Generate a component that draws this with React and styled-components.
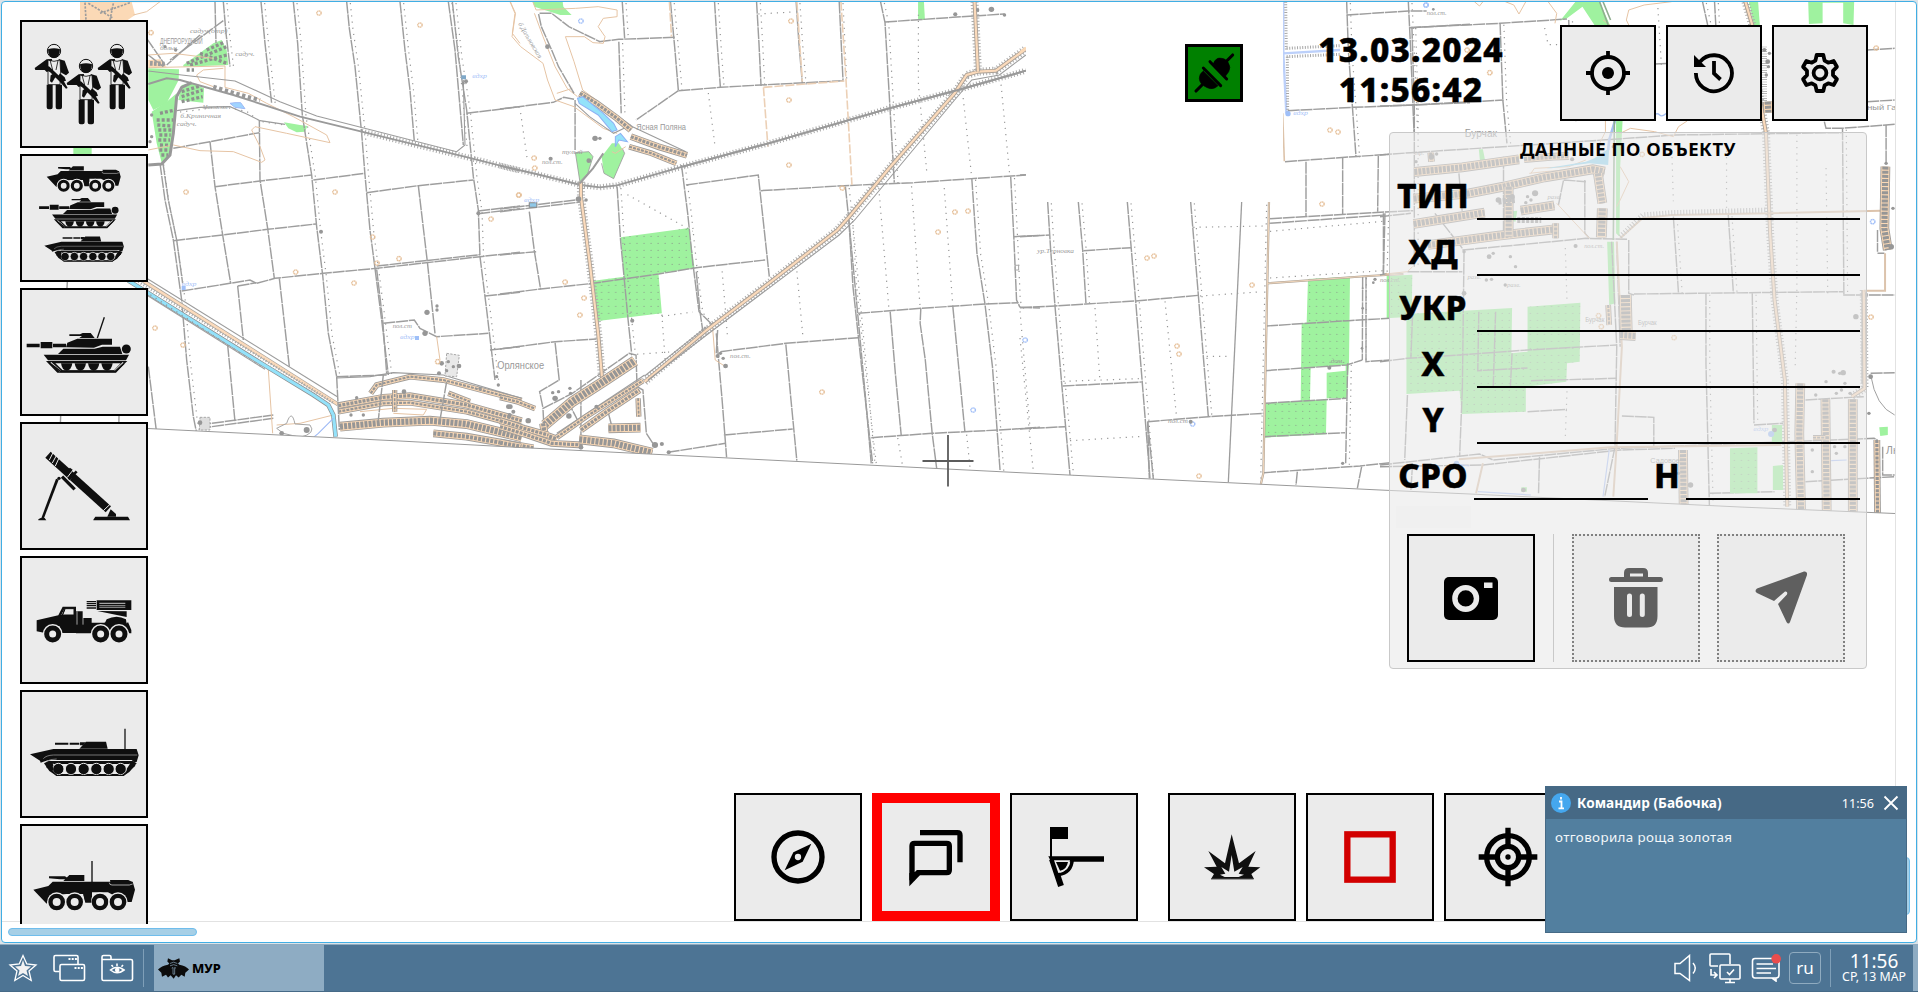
import React from "react";
import styled, { createGlobalStyle } from "styled-components";

const ink = "#0f0f0f";
const paper = "#ebebeb";
const uiFont = '"Noto Sans", "Open Sans", "Liberation Sans", sans-serif';

const GlobalStyle = createGlobalStyle`
  html, body { margin: 0; padding: 0; background: #dcdcdc; overflow: hidden; }
  * { box-sizing: border-box; }
`;

const Desktop = styled.div`
  width: 1918px;
  height: 992px;
  display: flex;
  flex-direction: column;
  position: relative;
  overflow: hidden;
  font-family: ${uiFont};
  background: #dce3e8;
`;

const AppWindow = styled.section`
  position: relative;
  flex: none;
  height: 942px;
  margin: 1px 1px 1px;
  border: 1px solid #41aee4;
  border-radius: 4px;
  background: #fff;
  overflow: hidden;
`;

const MapSvg = styled.svg`
  position: absolute;
  inset: 0;
  width: 1914px;
  height: 940px;
  font-family: "Liberation Sans", sans-serif;
`;

const Overlay = styled.div`
  position: absolute;
  inset: 0;
  padding: 18px 48px 18px 18px;
  display: flex;
`;

const Palette = styled.nav`
  display: flex;
  flex-direction: column;
  gap: 6px;
  width: 128px;
  height: 904px;
  overflow: hidden;
`;

const Stage = styled.div`
  flex: 1;
  display: flex;
  flex-direction: column;
  padding-top: 5px;
`;

const borders = {
  plain: "2px solid #000",
  active: "10px solid #f00",
  disabled: "2px dotted #808080",
};

const Key = styled.button`
  flex: none;
  width: ${(p) => p.$size || 128}px;
  height: ${(p) => p.$size || 128}px;
  padding: 0;
  display: flex;
  align-items: center;
  justify-content: center;
  overflow: hidden;
  background: ${paper};
  border: ${(p) => borders[p.$kind || "plain"]};
  svg { display: block; flex: none; }
`;

const TopRow = styled.div`
  display: flex;
  justify-content: flex-end;
  align-items: center;
  height: 96px;
`;

const LinkState = styled.div`
  width: 58px;
  height: 58px;
  border: 3px solid #000;
  background: #008000;
  display: flex;
`;

const Clock = styled.div`
  width: 216px;
  margin: 0 41px 9px 60px;
  text-align: center;
  font-size: 33.5px;
  font-weight: 800;
  line-height: 40px;
  letter-spacing: 1.15px;
  -webkit-text-stroke: 0.5px #000;
  color: #000;
  white-space: nowrap;
`;

const TopKeys = styled.div`
  display: flex;
  gap: 10px;
`;

const Panel = styled.section`
  align-self: flex-end;
  margin: 11px 1px 0 0;
  width: 478px;
  height: 537px;
  border: 1px solid #c9c9c9;
  border-radius: 4px;
  background: rgba(233, 233, 233, 0.57);
  padding: 3px 6px 0 6px;
  display: flex;
  flex-direction: column;
`;

const PanelTitle = styled.h2`
  margin: 0;
  height: 28px;
  line-height: 26px;
  text-align: center;
  font-size: 18.5px;
  font-weight: 700;
  letter-spacing: 0.52px;
  color: #000;
`;

const Field = styled.div`
  display: flex;
  height: 56px;
  align-items: flex-end;
`;

const FieldLabel = styled.label`
  width: ${(p) => p.$w || 74}px;
  text-align: center;
  font-size: 33.5px;
  font-weight: 800;
  line-height: 46px;
  height: 56px;
  color: #000;
  padding-top: 8px;
  letter-spacing: 0.2px;
  -webkit-text-stroke: 0.4px #000;
`;

const FieldLine = styled.div`
  flex: 1;
  height: 2px;
  background: #000;
  margin-left: ${(p) => p.$gap ?? 7}px;
`;

const StatusChip = styled.div`
  width: 75px;
  height: 22px;
  margin-top: 6px;
  background: #f0f0f0;
`;

const Actions = styled.div`
  display: flex;
  margin: 6px 0 0 11px;
`;

const Divider = styled.div`
  width: 1px;
  height: 128px;
  margin: 0 18px;
  background: #c9c9c9;
`;

const SendSlot = styled.div`
  margin-left: 17px;
`;

const Toolbar = styled.div`
  display: flex;
  gap: 10px;
  margin: 124px 0 0 586px;
`;

const ToolGap = styled.div`
  width: 10px;
`;

const HScroll = styled.div`
  position: absolute;
  left: 6px;
  top: 926px;
  width: 189px;
  height: 8px;
  border-radius: 4px;
  background: #a6cfe6;
  border: 1px solid #6fbdec;
`;

const VScroll = styled.div`
  position: absolute;
  left: 1900px;
  top: 855px;
  width: 8px;
  height: 58px;
  border-radius: 4px;
  background: #a6cfe6;
  border: 1px solid #6fbdec;
`;

const Toast = styled.aside`
  position: absolute;
  left: 1545px;
  top: 786px;
  width: 362px;
  height: 147px;
  background: #527f9f;
  border: 1px solid #466a86;
  color: #fff;
`;

const ToastHead = styled.header`
  height: 32px;
  display: flex;
  align-items: center;
  padding: 0 7px 0 5px;
  background: #466985;
`;

const ToastSender = styled.strong`
  flex: 1;
  margin-left: 6px;
  font-size: 13.6px;
  font-weight: 700;
  line-height: 34px;
  letter-spacing: 0.05px;
`;

const ToastTime = styled.span`
  font-size: 12.6px;
  margin-right: 9px;
`;

const ToastBody = styled.p`
  margin: 0;
  padding: 8px 9px;
  font-size: 13.4px;
  line-height: 20px;
  letter-spacing: 0.36px;
  color: #f3f7fa;
`;

const Taskbar = styled.footer`
  height: 48px;
  display: flex;
  align-items: center;
  background: #4d7494;
  border-top: 1px solid #8fabc0;
  border-bottom: 1px solid #466a87;
  color: #fff;
`;

const Launchers = styled.div`
  display: flex;
  align-items: center;
  gap: 14px;
  padding-left: 8px;
  width: 143px;
  height: 46px;
`;

const BarRule = styled.div`
  width: 1px;
  height: 38px;
  background: #7f9fb8;
  margin-right: ${(p) => p.$after}px;
`;

const Task = styled.div`
  width: 170px;
  height: 46px;
  display: flex;
  align-items: center;
  padding-left: 4px;
  gap: 3px;
  background: #8eacc3;
  color: #000;
  font-size: 12.8px;
  font-weight: 800;
`;

const Tray = styled.div`
  margin-left: auto;
  display: flex;
  align-items: center;
  height: 46px;
`;

const TrayIcons = styled.div`
  display: flex;
  align-items: center;
  gap: 9px;
`;

const LayoutBadge = styled.div`
  width: 32px;
  height: 32px;
  margin: 0 9px 0 8px;
  border: 1px solid #8fabc0;
  border-radius: 4px;
  font-size: 17px;
  line-height: 29px;
  text-align: center;
`;

const TrayClock = styled.div`
  width: 74px;
  margin-right: 2px;
  text-align: center;
  white-space: nowrap;
`;

const TrayTime = styled.div`
  font-size: 19px;
  line-height: 17px;
`;

const TrayDate = styled.div`
  font-size: 12.3px;
  line-height: 14px;
`;

const BarEdge = styled.div`
  width: 5px;
  height: 46px;
  background: #8eacc3;
`;

/* ---------- map ---------- */

const nss = { vectorEffect: "non-scaling-stroke", fill: "none" };
const each = (list, fn) => list.map((d, i) => React.cloneElement(fn(d), { key: i }));
const pts = (s) => "M" + s;

const Road = ({ d }) => <path d={pts(d)} {...nss} stroke="#9e9e9e" strokeWidth="1.45" strokeDasharray="12 0.8" />;
const Dots = ({ d, dx = 14 }) => (
  <path d={pts(d)} {...nss} stroke="#969696" strokeWidth="1.2" strokeDasharray="1.2 5" transform={`translate(${dx} 4)`} />
);
const RoadDots = ({ d }) => (
  <g>
    <Road d={d} />
    <Dots d={d} dx={11} />
  </g>
);
const Thin = ({ d, c = "#9c9c9c", w = 1.1 }) => <path d={pts(d)} {...nss} stroke={c} strokeWidth={w} />;
const Contour = ({ d }) => <path d={pts(d)} {...nss} stroke="#e6c4a4" strokeWidth="1" strokeLinejoin="round" />;
const Rail = ({ d, ticks }) => (
  <g>
    {ticks && <path d={pts(d)} {...nss} stroke="#a8a8a8" strokeWidth="6" strokeDasharray="1 2.2" />}
    <path d={pts(d)} {...nss} stroke="#9a9a9a" strokeWidth="1.9" />
  </g>
);
const Highway = ({ d }) => (
  <g>
    <path d={pts(d)} {...nss} stroke="#ababab" strokeWidth="8" strokeDasharray="1 2.2" />
    <path d={pts(d)} {...nss} stroke="#aaa096" strokeWidth="4" />
    <path d={pts(d)} {...nss} stroke="#fbdabb" strokeWidth="2.2" />
  </g>
);
const Street = ({ d, w = 6 }) => (
  <g>
    <path d={pts(d)} {...nss} stroke="#9f9c99" strokeWidth={w + 1.8} />
    <path d={pts(d)} {...nss} stroke="#fbd9b6" strokeWidth={w} />
    <path d={pts(d)} {...nss} stroke="#969696" strokeWidth={w - 1.8} strokeDasharray="3 1.1" />
  </g>
);
const Wood = ({ d, dotted = true }) => (
  <g>
    <path d={pts(d) + "Z"} fill="#9ff29f" />
    {dotted && <path d={pts(d) + "Z"} fill="url(#orchard)" />}
  </g>
);
const Mounds = ({ at, c = "#e6c09a" }) =>
  at.map(([x, y]) => (
    <circle key={x + "-" + y} cx={x} cy={y} r="6.5" fill="none" stroke={c} strokeWidth="4.2" strokeDasharray="4.500 1" />
  ));
const Blobs = ({ at }) => at.map(([x, y, r = 5]) => <circle key={x + "-" + y} cx={x} cy={y} r={r} fill="#979797" />);
const Name = ({ x, y, s = 22, c = "#999", italic, children, w }) => (
  <text x={x} y={y} fontSize={s} fill={c} textLength={w} lengthAdjust="spacingAndGlyphs" fontStyle={italic ? "italic" : "normal"} fontFamily={italic ? "Liberation Serif, serif" : "Liberation Sans, sans-serif"}>
    {children}
  </text>
);

const westRoads = [
  "783 5L795 130L815 310", "880 5L893 130L907 345L935 525L950 680L968 825L985 1000L1010 1130",
  "1040 5L1048 85L1065 200L1085 400L1095 525L1110 690L1125 805L1145 960L1165 1125",
  "1200 5L1215 150L1230 270L1243 425", "1345 5L1365 150L1390 435", "1357 5L1375 170L1400 330L1420 530L1435 630L1440 770L1460 930L1485 1140",
  "480 490L495 600L520 720L545 900L560 1080L580 1250L590 1300", "670 5L678 100L690 200",
];
const westPlain = [
  "645 5L648 130", "489 490L505 600L530 720L548 850",
  "630 425L645 560L668 705L692 850", "778 360L780 540L803 685L823 835",
  "520 445L630 425L778 398", "645 560L780 543L935 525", "940 540L1095 520", "1100 578L1255 557L1420 540",
  "520 722L668 705L803 688L948 672", "545 873L690 850L750 840L770 850L825 835L970 820L1130 805L1440 770L1560 757",
  "1130 798L1440 764", "713 858L770 848", "713 858L730 1020", "838 835L868 1100", "1255 557L1282 785L1305 1000", "1400 340L1560 320",
  "1435 633L1560 618", "1435 641L1560 626", "1455 888L1560 877", "1150 970L1243 960L1260 985L1310 1010L1465 1000",
  "1470 1050L1560 1040", "445 1100L470 1300", "683 1035L705 1265", "598 1275L820 1245", "598 1285L820 1255", "1010 1130L1160 1125", "202 846L200 880",
  "182 1248L180 1300", "357 1248L356 1300", "445 165L490 200", "670 62L510 180", "600 105L500 195", "440 115L495 195", "1130 808L1148 960L1160 1120",
];
const WestSheet = () => (
  <g transform="scale(0.33333)">
    <path d="M240 5L395 5L405 45L380 62L240 62Z" fill="#fbd9b6" />
    <Wood d="445 205L537 208L536 240L500 310L460 330L445 300" dotted={false} />
    <Wood d="550 195L640 130L665 120L680 150L685 195L550 200" dotted={false} />
    <Wood d="535 300L545 255L575 250L612 265L610 308" dotted={false} />
    <Wood d="455 335L500 305L530 280L520 400L505 470L485 488L470 430" dotted={false} />
    <Wood d="852 367L900 375L922 378L915 395L890 397L865 385" dotted={false} />
    <Wood d="220 444L275 444L275 462L220 462" dotted={false} />
    <path d="M560 190L680 140M570 195L680 165M600 160L680 190M620 150L670 128M545 290L608 270M545 305L608 290M545 275L600 258M480 340L525 330M470 360L520 360M475 390L515 390M475 420L510 420M478 450L505 450M472 375L515 378M478 405L512 405M480 435L508 436M484 465L505 465M560 210L582 210" stroke="#8d918d" strokeWidth="10" strokeDasharray="9 6" fill="none" />
    <path d="M265 10L340 55M340 10L330 60M255 8L258 60M300 40L390 8" stroke="#9c9c9c" strokeWidth="5" strokeDasharray="7 4" fill="none" />
    <path d="M445 180L480 178L500 200L445 202Z" fill="#fbd9b6" />
    <path d="M450 190L495 192" stroke="#9c9c9c" strokeWidth="14" strokeDasharray="8 4" />
    {each(westRoads, (d) => <RoadDots d={d} />)}
    {each(westPlain, (d) => <Road d={d} />)}
    {each([
      "395 5L480 5L440 35L400 45", "445 165L520 160L640 175", "445 203L675 198L675 262L745 280L800 310L880 350L980 405L990 428L860 400L765 380L755 390L780 440L795 480L785 487L700 455L600 452L520 435L445 450",
      "670 205L610 210L590 225L600 245L640 260", "1530 5L1545 40L1537 100L1560 130", "805 1110L818 1300", "1310 1010L1320 1080", "830 1275L900 1270L1000 1245",
      "1080 1235L1180 1225L1280 1228L1270 1245L1180 1240",
    ], (d) => <Contour d={d} />)}
    <Rail d="445 252L500 235L540 240L700 285L900 350L1085 395" />
    <Rail ticks d="1085 395L1415 475L1560 512" />
    <path d="M445 495L485 492L510 465L520 400L530 290L545 262L575 248" {...nss} stroke="#989898" strokeWidth="3" />
    <path d="M640 260L740 290L780 300" stroke="#989898" strokeWidth="12" strokeDasharray="10 8" fill="none" />
    <Thin d="445 213L545 225L705 243L840 305L950 348L1370 455L1395 435L1390 240" />
    <Dots d="540 332L600 325L660 315L740 330L780 360L860 372" dx={0} />
    <Thin d="530 332L600 322L690 320L740 342L780 362L855 373" />
    <path d="M690 310L705 322L735 326L722 308L705 308Z" fill="#9fd4ff" stroke="#9db9f5" strokeWidth="3" />
    <Thin d="440 835L1012 1190" />
    <path d="M430 843L1014 1213" {...nss} stroke="#aaa49c" strokeWidth="4" />
    <path d="M430 843L1014 1213" {...nss} stroke="#fbdabb" strokeWidth="2.6" />
    <path d="M415 845L1000 1208" {...nss} stroke="#a6a6a6" strokeWidth="2.600" strokeDasharray="1 2" />
    <path d="M385 842L800 1100L940 1185L985 1215L1000 1245L1007 1310" {...nss} stroke="#8f8f8f" strokeWidth="4.6" />
    <path d="M385 842L800 1100L940 1185L985 1215L1000 1245L1007 1310" {...nss} stroke="#94e2fa" strokeWidth="3.2" />
    <Dots d="420 860L790 1100" dx={0} />
    <Thin d="440 885L795 1108" />
    <Thin d="1000 1255L955 1300L925 1325" c="#9db9f5" />
    <Street d="1015 1217L1150 1192L1230 1187L1400 1215L1565 1262" w={5} />
    <Street d="1015 1235L1150 1210L1230 1208L1400 1235L1565 1280" w={4} />
    <Street d="1112 1180L1130 1155L1230 1130L1330 1140L1565 1202" w={4} />
    <Street d="1020 1280L1150 1268L1290 1262L1400 1272L1565 1312" w={8} />
    <Street d="1300 1300L1400 1310L1600 1345" w={6} />
    <Street d="1345 1180L1410 1205" w={4} />
    <Street d="1184 1170L1184 1235" w={3.5} />
    <Road d="1150 1125L1135 1260" /><Road d="1340 1145L1320 1260" /><Road d="1010 1130L1018 1290" />
    <Thin d="1010 1134L1110 1130L1180 1118L1330 1125L1565 1195" />
    <path d="M1340 1060L1378 1066L1370 1130L1335 1128Z" fill="#e9e9e9" stroke="#a8a8a8" strokeWidth="3" strokeDasharray="7 4" />
    <path d="M600 1252H630V1290H598Z" fill="#dedede" stroke="#a8a8a8" strokeWidth="3" strokeDasharray="7 4" />
    <path d="M830 1285L860 1270Q875 1225 885 1272L930 1275Q950 1300 900 1312L850 1300Z" fill="none" stroke="#a5a5a5" strokeWidth="3" />
    <Blobs at={[[1281, 937, 8], [1311, 918], [1311, 930], [1275, 1000, 8], [1325, 1090, 7], [1377, 1098, 7], [1345, 1085], [1360, 1100], [1340, 1112], [1317, 1120, 6], [1490, 1130], [1495, 1155], [963, 695, 6], [1398, 244, 6], [600, 1268, 7], [455, 345], [455, 410], [450, 425], [1435, 640, 6], [1390, 250, 4], [1440, 1165], [1525, 1220, 7], [1527, 1250, 6], [1070, 1193], [1090, 1245], [1053, 1245], [1212, 1175, 7], [1540, 1235, 6], [845, 1300, 7], [920, 1290, 9], [495, 140], [527, 150]]} />
    <Mounds at={[[957, 39], [1260, 75], [453, 98], [558, 576], [1005, 576], [887, 816], [1062, 849], [1118, 711], [1131, 789], [1197, 776], [465, 984], [549, 1035], [1473, 657], [1556, 585], [1313, 1085]]} />
    <g fill="#9fbff8"><path d="M545 858h12v12h-12zM1245 1008h12v12h-12z" /></g>
    <path d="M1384 226h14v12h-14z" fill="#7fa8c8" />
    <Name x="480" y="132" s={26} w={128}>ДНЕПРОРУДНЫЙ</Name>
    <Name x="570" y="99" s={19} w={112} italic>садуч(отр)</Name>
    <Name x="480" y="149" s={19} w={56} italic>больн.</Name>
    <Name x="706" y="167" s={19} w={58} italic>садуч.</Name>
    <Name x="541" y="354" s={19} w={122} italic>б.Криничная</Name>
    <Name x="530" y="377" s={19} w={60} italic>садуч.</Name>
    <Name x="608" y="328" s={17} w={76} italic>Маховское</Name>
    <Name x="1417" y="234" s={19} w={44} c="#a6c2f8" italic>вдхр</Name>
    <Name x="545" y="858" s={19} w={44} c="#a6c2f8" italic>вдхр</Name>
    <Name x="1200" y="1018" s={19} w={44} c="#a6c2f8" italic>вдхр</Name>
    <Name x="1178" y="983" s={19} w={58} italic>пол.ст</Name>
  </g>
);

const midRoads = [
  "495 5L508 150L518 272", "623 5L630 120L640 262", "745 5L752 130L758 258", "860 5L868 130L878 250", "985 5L996 240", "1105 5L1118 68L1130 280L1145 548",
  "527 495L545 640L560 790L578 935L620 978", "345 125L352 340", "355 5L362 115", "1003 560L1013 660L1045 1010L1062 1200L1078 1390", "1013 660L1025 860L1050 1100L1082 1390",
  "340 560L350 720L362 850L372 960L382 1058", "1370 535L1385 760L1408 910L1430 1100L1452 1410", "1483 530L1492 710L1500 900L1510 922",
];
const midPlain = [
  "287 125L345 118L508 112", "518 272L395 360", "518 272L640 262L758 255L1000 242", "0 327L155 307L185 292L215 298", "0 627L235 598", "0 635L235 606",
  "85 635L100 755L118 868", "0 765L105 755", "0 882L118 867L270 850L460 822L570 803L770 780", "0 1047L160 1025L280 1017", "160 1028L172 1140L115 1175L125 1225L210 1180L375 1060L395 1065L398 1160L415 1170L425 1300L450 1340",
  "540 555L750 525L782 830", "757 572L1000 557L1200 548L1527 525", "640 1055L830 1030L1040 1013", "830 1033L845 1200L862 1382", "628 1000L645 1200L658 1372",
  "650 1305L850 1287", "487 1357L655 1330", "1040 940L1222 925L1410 912L1505 908", "1133 935L1148 1120L1165 1305", "1222 925L1220 970L1235 1080L1255 1300L1268 1405",
  "1315 920L1330 1080L1350 1295", "1078 1313L1255 1300L1450 1290L1568 1282", "1118 66L1315 52L1465 42", "1492 710L1568 706", "1510 922L1568 924", "218 300L218 450",
  "570 815L580 930L590 1000", "628 1060L632 990", "235 1140L235 1340", "315 1240L325 1280", "195 1200L230 1270", "125 1230L130 1330",
];
const MidSheet = () => (
  <g transform="translate(500 0) scale(0.34437 0.33333)">
    <Wood d="95 5L182 5L184 20L208 45L175 45L100 20" dotted={false} />
    <Wood d="1214 5L1231 5L1234 60L1214 60" dotted={false} />
    <Wood d="351 712L549 684L565 805L460 820L470 940L284 963L272 842L360 830" />
    <Wood d="219 458L258 455L270 470L255 520L232 545" dotted={false} />
    <Wood d="295 470L325 430L345 430L362 460L330 536L302 520" dotted={false} />
    <path d="M219 458L258 455L270 470L255 520L232 545ZM295 490L302 520L330 536L362 460L355 445" fill="none" stroke="#9c9c9c" strokeWidth="2.500" />
    {each(midRoads, (d) => <RoadDots d={d} />)}
    {each(midPlain, (d) => <Road d={d} />)}
    {each([
      "60 335L80 480", "605 275L625 440", "1215 40L1215 250L1240 520", "1345 290L1370 530", "1455 250L1480 520", "1100 560L1130 930", "1195 555L1220 920", "1290 560L1315 915",
      "645 810L655 930L660 1000", "862 810L880 1010", "1155 1310L1170 1400", "1355 1300L1365 1400", "470 940L480 1080", "380 1060L520 1050L620 985", "470 945L560 932", "1510 930L1540 1290", "370 580L560 690", "750 38L850 32",
    ], (d) => <Dots d={d} dx={0} />)}
    {each([
      "30 5L45 40L35 110L60 140L125 190L138 240L160 300L215 320L300 385L340 400", "95 5L105 30L220 25L285 20L340 30L340 50L300 55L285 80L305 110L300 130L270 128L245 110L190 110L215 185L240 270L345 350",
      "100 40L125 110L160 200L195 265L225 290", "165 280L210 265", "325 455L335 460L365 440", "617 980L625 1080L655 1100",
    ], (d) => <Contour d={d} />)}
    <path d="M765 262L1000 243M492 5L498 110M862 5L878 245M990 5L1005 245L1022 555M765 262L778 440" {...nss} stroke="#ecd0b6" strokeWidth="1.6" strokeDasharray="9 2" />
    <Road d="115 40L150 40L200 80L290 125" /><Road d="112 42L120 80L150 150L170 200L215 280" />
    <Rail ticks d="0 497L105 522L235 555" />
    <Rail ticks d="235 555L290 562L340 556L530 500L780 430L1130 325L1330 270L1527 212" />
    <Highway d="235 545L235 590L262 800L285 1000L297 1140" />
    <Highway d="420 1145L600 990L780 850L980 690L1010 655L1130 505L1320 280L1355 225L1388 215L1440 212L1527 147" />
    <Highway d="1378 5L1388 215" />
    <Rail d="530 500L780 430L1130 325L1330 270L1527 212" />
    <Thin d="430 1140L600 1005L780 865L985 705L1030 660L1320 300L1370 240L1450 225L1527 165" />
    <Thin d="300 460L270 505L232 550" w={2} /><Thin d="165 1300L420 1125" /><Thin d="420 1128L600 980" />
    <Thin d="218 310L260 350L330 400L380 375" /><Thin d="345 350L385 380L540 455" />
    <Street d="232 280L280 310L340 355L380 390" w={5} />
    <Street d="380 410L460 440L543 466" w={5} />
    <Street d="375 440L440 460L512 490" w={4} />
    <path d="M225 295L240 290L300 340L330 370L340 390L325 395L285 345L230 310ZM335 410L350 400L370 425L345 420L335 440Z" fill="#94e2fa" stroke="#8fb2f4" strokeWidth="3" />
    <Street d="130 1275L210 1205L300 1145L392 1082" w={9} />
    <Street d="125 1270L130 1305L165 1318" w={6} />
    <Street d="165 1312L250 1250L415 1142" w={4} />
    <Street d="235 1290L310 1235L405 1170" w={5} />
    <Street d="315 1285L408 1283" w={8} />
    <Street d="401 1195L403 1250" w={3.6} />
    <Street d="0 1262L70 1285L140 1305" w={5} />
    <Street d="0 1280L70 1302L150 1330L240 1335" w={5} />
    <Street d="230 1318L330 1330L442 1358" w={8} />
    <Street d="0 1192L50 1205L102 1226" w={4} />
    <Street d="0 1328L60 1340" w={6} />
    <Blobs at={[[276, 415, 8], [290, 415], [138, 140, 7], [147, 476, 6], [258, 482, 7], [228, 597, 8], [250, 600], [384, 962, 6], [632, 1068, 6], [655, 1098, 7], [648, 1075], [640, 1060], [160, 1195, 8], [153, 1178], [170, 1175], [203, 1165], [205, 1180], [30, 1220, 7], [28, 1245, 6], [82, 1262, 8], [200, 1248, 8], [450, 1335, 9], [470, 1332, 6], [490, 1357, 6], [1322, 43, 6], [1387, 30], [1427, 28, 8], [1465, 45, 5], [280, 1220, 6], [235, 1342, 7]]} />
    <path d="M1496 796h10v14h-10z" fill="none" stroke="#aaa" strokeWidth="3" />
    <Mounds at={[[845, 63], [839, 300], [839, 495], [994, 564], [1321, 636], [1359, 633], [1272, 696], [99, 474], [101, 504], [55, 585], [189, 846], [244, 894], [232, 945], [935, 1176]]} />
    <Mounds c="#a3c0f8" at={[[235, 63], [1525, 1020], [1374, 1230]]} />
    <path d="M85 608h22v14h-22z" fill="#8fc8e8" stroke="#888" strokeWidth="3" />
    <Name x="396" y="390" s={26} w={144}>Ясная Поляна</Name>
    <Name x="-8" y="1107" s={33} w={136}>Орлянское</Name>
    <Name x="122" y="491" s={19} w={60} italic>пол.ст.</Name>
    <Name x="180" y="463" s={19} w={60} italic>тулый</Name>
    <Name x="668" y="1074" s={19} w={60} italic>пол.ст.</Name>
    <Name x="70" y="606" s={18} w={44} c="#a6c2f8" italic>вдхр</Name>
    <g transform="translate(52 72) rotate(60)"><Name x="0" y="0" s={20} w={120} italic>б.Дальновская</Name></g>
  </g>
);

const eastRoads = [
  "83 606L92 750L105 918L125 1150L150 1425", "175 606L188 750L198 912", "322 606L335 760L347 903L367 1150L390 1435", "512 606L535 885L550 1070L565 1250", "980 5L985 150L1008 470",
  "1165 5L1172 150L1182 395", "1028 830L1027 1080", "1095 640L1090 825", "983 1090L977 1390",
];
const eastPlain = [
  "0 710L90 705", "190 752L333 743", "0 923L105 918L198 912L347 903L535 886", "128 1158L365 1146", "0 1287L135 1280", "383 1265L565 1250L730 1240", "383 1265L400 1437", "858 485L858 650", "968 472L968 645",
  "1075 468L1073 635", "795 485L1000 470L1110 463", "750 656L1095 636L1180 632", "748 670L1095 645", "738 978L985 962L1110 955", "735 1112L980 1095L1027 1080", "735 1210L980 1195", "732 1310L975 1298", "732 1418L1020 1398L1110 1388",
  "980 45L1165 33L1220 33", "1172 83L1350 73", "803 332L1000 322L1180 315L1350 308", "1038 830L1038 1085L1110 1080", "832 1415L828 1455", "1025 1400L1012 1465", "0 525L18 524", "383 1265L388 1435",
];
const EastSheet = () => (
  <g transform="translate(1020 0) scale(0.33333)">
    <Wood d="864 837L990 830L987 1090L980 1195L920 1195L920 1118L977 1112L977 1095L872 1102L870 1200L920 1200L918 1303L732 1313L732 1210L842 1202L845 970L860 968" />
    <Wood d="1100 828L1177 824L1175 950L1100 955" />
    {each(eastRoads, (d) => <RoadDots d={d} />)}
    {each(eastPlain, (d) => <Road d={d} />)}
    {each(["520 678L730 674", "540 884L715 872", "225 920L240 1140", "435 900L470 1250", "0 1010L40 1410", "740 610L722 1440", "750 690L1090 660", "150 1318L370 1305", "560 1065L620 1065", "130 1140L360 1132", "750 830L1090 808"], (d) => <Dots d={d} dx={0} />)}
    <Thin d="665 606L625 1447" w={1.3} />
    <path d="M747 606L742 850L730 1420L722 1455M742 850L1045 828L1150 822" {...nss} stroke="#aaa095" strokeWidth="2.2" />
    <path d="M747 606L742 850L730 1420L722 1455M742 850L1045 828L1150 822" {...nss} stroke="#ecd2b8" strokeWidth="1.2" />
    <path d="M790 5L790 160L799 340M790 160L960 150" {...nss} stroke="#bcd0fa" strokeWidth="2.4" />
    <path d="M797 5L799 150M802 170L803 335M800 145L960 137M800 170L960 163" {...nss} stroke="#a6a6a6" strokeWidth="3" strokeDasharray="1 1.6" />
    <path d="M788 340L793 484" {...nss} stroke="#ddc3aa" strokeWidth="1.6" />
    <path d="M0 157L18 143" stroke="#fbd9b6" strokeWidth="7" />
    <circle cx="804" cy="341" r="8" fill="#9fbff8" />
    <Mounds at={[[930, 390], [954, 396], [906, 612], [381, 774], [402, 768], [696, 855], [471, 1038], [477, 1062], [537, 1428]]} />
    <Mounds c="#a3c0f8" at={[[518, 1272], [1218, 15]]} />
    <Blobs at={[[1028, 925, 4], [1028, 865, 3], [1026, 1045, 4], [1065, 838, 5], [1060, 848, 4], [928, 1103, 6], [512, 1265, 6], [968, 1390, 5], [1240, 28, 4]]} />
    <Name x="52" y="758" s={19} w={110} italic>ур.Терновка</Name>
    <Name x="820" y="345" s={19} w={44} c="#a6c2f8" italic>вдхр</Name>
    <Name x="932" y="1088" s={19} w={40} italic>дом.</Name>
    <Name x="444" y="1270" s={17} w={60} italic>пол.ст</Name>
    <Name x="1220" y="46" s={17} w={60} italic>пол.ст.</Name>
  </g>
);

const FarEastSheet = () => (
  <g transform="translate(1380 0) scale(0.34311 0.33333)">
    <Wood d="525 62L570 5L640 5L670 75L625 75L590 20L545 55" dotted={false} />
    <Wood d="1075 5L1102 5L1107 75L1090 75" dotted={false} />
    <Wood d="1248 5L1382 5L1380 75L1350 70L1350 8L1290 8L1290 70L1250 72" dotted={false} />
    <Wood d="688 362L707 362L700 500L698 710L688 700" dotted={false} />
    <Wood d="662 725L682 725L686 910L668 915" dotted={false} />
    <Wood d="288 448L300 448L308 490L292 492" dotted={false} />
    <Wood d="370 635L400 632L395 665L370 660" dotted={false} />
    <Wood d="77 942L385 924L383 1060L430 1055L430 920L584 908L582 1085L545 1090L543 1145L425 1160L425 1235L238 1242L232 1172L77 1182" />
    {each(["93 80L100 320L100 800", "550 60L560 360", "350 70L358 300L370 430", "975 5L980 100", "1348 385L1352 885", "940 5L955 75", "950 880L950 1090L960 1515", "1085 880L1090 1270", "855 650L870 880", "1015 645L1030 880"], (d) => <RoadDots d={d} />)}
    {each([
      "85 83L350 70L545 57", "0 318L93 315L360 300", "0 465L90 458L480 432L860 405L1345 398", "1420 150L1500 145", "1420 305L1500 300", "1295 365L1300 385L1345 385L1500 373", "1475 375L1475 490",
      "1350 885L1500 885", "740 882L1350 875", "800 192L840 190", "0 650L90 640", "10 640L10 820", "240 750L400 735L600 715L720 718", "245 750L240 1170", "80 815L240 815", "597 540L597 700L610 715", "520 615L535 540L600 545",
      "0 1085L80 1075L230 1065L430 1050L690 1035", "440 1142L690 1135", "80 1185L72 1380", "240 1165L232 1370", "430 1235L545 1228", "705 1248L798 1252L798 1340", "0 1395L290 1362L330 1380L690 1345L1440 1315L1450 1320",
      "0 1400L300 1395L700 1350L860 1345", "725 720L725 880L740 885", "1430 1120L1500 1118", "1450 760L1470 760", "1450 690L1450 755", "465 1370L462 1480", "960 1480L1150 1475", "1240 1200L1410 1190", "1240 1445L1500 1430", "1465 1340L1465 1425L1500 1425",
      "1090 1275L1175 1270", "675 725L690 1040L685 1340L655 1490", "690 725L700 1040", "1405 870L1405 1150", "160 640L240 745", "230 520L240 640", "360 470L360 700", "0 825L20 820", "95 1390L90 1470",
      "288 935L285 1112L430 1104", "337 935L330 1160", "95 942L90 1075", "385 1060L380 1160",
    ], (d) => <Road d={d} />)}
    {each(["850 430L855 600", "1010 430L1010 640", "1215 400L1215 860L1210 1100", "540 740L545 900", "545 1170L540 1310", "480 80L490 130L545 130", "810 20L820 190", "1300 500L1305 880"], (d) => <Dots d={d} dx={0} />)}
    {each([
      "275 5L290 18L300 5", "365 5L390 15L405 42L425 5", "490 5L515 40L510 70", "850 5L770 15L725 30L718 60L725 75", "657 362L657 395L640 430", "700 400L730 385L800 395L855 410L870 380L895 363",
      "435 520L480 515L600 505", "700 500L725 545L700 600L690 620", "515 610L610 715", "440 520L450 505L550 500L600 480", "15 822L80 815L95 800", "1060 5L1080 75", "775 1513L870 1513", "650 60L670 75",
    ], (d) => <Contour d={d} />)}
    <path d="M485 505L600 485L625 475L668 445L665 495L610 490L500 505Z" fill="#94d8f4" />
    <path d="M685 362L668 420L665 450" {...nss} stroke="#a6c0f2" strokeWidth="2.6" />
    <path d="M640 5L665 75M650 5L672 60M683 362L680 720" {...nss} stroke="#8fae8f" strokeWidth="1.6" />
    <path d="M800 345Q808 338 815 345T835 340" {...nss} stroke="#a6c0f2" strokeWidth="1.4" />
    <Highway d="1065 5L1085 75L1108 300L1125 400L1137 700L1150 900L1180 1140L1187 1520" />
    <Highway d="1410 870L1412 1165L1375 1190" />
    <path d="M1130 640L1460 632M700 715L765 655L850 645L1130 640M690 725L705 1040L690 1330L680 1490M1472 760V872L1410 872M230 1378L670 1342L1170 1335M300 1390L280 1480" {...nss} stroke="#dcc3ac" strokeWidth="2" />
    <path d="M700 710L765 645L850 638L1130 630" {...nss} stroke="#aaa" strokeWidth="5" strokeDasharray="1 2" />
    <path d="M285 1475L440 1485M668 1350L650 1490M1315 1382L1360 1380M215 1390L260 1398" {...nss} stroke="#adc4f8" strokeWidth="1.2" />
    <Street d="100 516L240 502L405 478" w={8} />
    <Street d="420 477L505 470L550 468" w={6} />
    <Street d="98 596L260 580L360 560L480 532L620 508L655 515" w={8} />
    <Street d="98 672L200 655L305 638" w={8} />
    <Street d="410 632L508 616" w={8} />
    <Street d="140 735L345 707L510 688" w={8} />
    <Street d="375 560L375 710" w={8} />
    <Street d="512 670L512 715" w={5} />
    <Street d="635 520L648 610" w={8} />
    <Street d="648 625L645 712" w={9} />
    <Street d="715 885L718 1010" w={11} />
    <Street d="665 915L668 975" w={4} />
    <Street d="700 1005L745 1008" w={8} />
    <Street d="148 458L150 485" w={5} />
    <Street d="1130 305L1132 338" w={8} />
    <Street d="1473 500L1470 685L1480 750" w={8} />
    <Street d="1225 1150L1222 1300L1227 1528" w={8} />
    <Street d="1298 1198L1302 1535" w={8} />
    <Street d="1378 1198L1378 1535" w={8} />
    <Street d="1448 1320L1450 1540" w={5} />
    <Street d="883 1350L885 1515" w={8} />
    <Street d="1262 1313L1298 1313" w={3.5} />
    <path d="M345 605L395 600M400 660H470" stroke="#9c9c9c" strokeWidth="18" strokeDasharray="9 4" />
    <Wood d="1142 1275L1172 1275L1172 1328L1142 1328" dotted={false} />
    <Wood d="1020 1345L1100 1342L1100 1480L1020 1480" />
    <Wood d="1145 1398L1175 1395L1175 1470L1145 1470" dotted={false} />
    <Wood d="1455 1282L1480 1280L1480 1305L1458 1308" dotted={false} />
    <Wood d="412 1462L428 1462L428 1475L412 1475" dotted={false} />
    <path d="M1430 1125Q1445 1220 1500 1245" {...nss} stroke="#a0a0a0" />
    <path d="M1118 140V310" stroke="#a0a0a0" strokeWidth="20" strokeDasharray="2 5" />
    <Blobs at={[[150, 470, 8], [105, 485, 5], [165, 462, 5], [452, 580, 9], [440, 600], [425, 608], [430, 590], [318, 770, 7], [330, 760], [380, 770], [395, 800], [310, 840], [325, 838], [365, 855], [570, 738, 6], [1135, 160], [1120, 150, 6], [1130, 185, 7], [1132, 200], [1126, 225], [245, 880, 7], [245, 755], [1387, 950, 8], [1490, 740, 8], [1475, 490], [1495, 625], [1350, 1118, 8], [1322, 1115, 6], [1340, 1120], [1300, 1145], [1270, 1185], [1330, 1180], [1345, 1170], [1370, 1180], [1430, 1130, 7], [1260, 1350], [1325, 1340], [1330, 1360], [1355, 1340], [1260, 1415], [905, 1455, 8], [870, 1420, 5], [1150, 1290, 7], [418, 1470, 7], [1425, 1240], [1355, 1150], [560, 478, 6], [680, 440], [345, 600, 8], [385, 590, 8]]} />
    <Mounds at={[[254, 150], [320, 218], [764, 463], [637, 947], [645, 980], [857, 1013], [1446, 144], [1431, 951]]} />
    <Mounds c="#a3c0f8" at={[[134, 15], [1436, 665]]} />
    <circle cx="1140" cy="1302" r="9" fill="#9fbff8" /><circle cx="223" cy="1390" r="8" fill="#9fbff8" />
    <Name x="247" y="410" s={33} w={94}>Бурчак</Name>
    <Name x="598" y="966" s={20} w={56}>Бурчак</Name>
    <Name x="752" y="976" s={20} w={54}>Бурчак</Name>
    <Name x="788" y="1388" s={24} w={86}>Садовое</Name>
    <Name x="1420" y="330" s={24} w={100}>ный Гай</Name>
    <Name x="1475" y="1363" s={34} w={60}>Люб</Name>
    <Name x="488" y="598" s={18} w={40} italic>разв.</Name>
    <Name x="255" y="838" s={18} w={40} italic>разв.</Name>
    <Name x="370" y="860" s={18} w={40} italic>разв.</Name>
    <Name x="595" y="743" s={18} w={58} italic>пол.ст.</Name>
    <Name x="102" y="466" s={18} w={26} italic>тр.</Name>
    <Name x="1088" y="1293" s={18} w={44} c="#a6c2f8" italic>вдхр</Name>
    <Name x="0" y="845" s={18} w={60} italic>пол.ст.</Name>
  </g>
);

const MapView = () => (
  <MapSvg viewBox="2 2 1914 940">
    <defs>
      <clipPath id="sheetEdge">
        <path d="M2 2H1026V202H1283V2H1895V513.5L1740 507L1470 494L1380 490L1020 472.7L520 447.5L400 441L148 428.5L2 422Z" />
      </clipPath>
      <pattern id="orchard" width="20.5" height="21" patternUnits="userSpaceOnUse">
        <circle cx="8" cy="16" r="1.7" fill="#8a9a8a" />
      </pattern>
    </defs>
    <g clipPath="url(#sheetEdge)">
      <WestSheet />
      <MidSheet />
      <EastSheet />
      <FarEastSheet />
    </g>
    <path d="M148 428.5L400 441L520 447.5L1020 472.7L1380 490L1470 494L1740 507L1895 513.5" fill="none" stroke="#9a9a9a" />
    <path d="M1895.5 2V921.5H2" fill="none" stroke="#e2e2e2" />
    <path d="M922.5 461H973.5M948 435V486.5" stroke="#5c5c5c" strokeWidth="1.8" />
  </MapSvg>
);

/* ---------- object glyphs, drawn on a 384 unit square ---------- */

const Glyph = ({ children }) => (
  <svg width="124" height="124" viewBox="6 6 372 372" fill={ink}>{children}</svg>
);

const Tank = ({ aerial }) => (
  <g>
    <path d="M20 167H59V178H20ZM62 162H97V181H62ZM99 167H138V178H99Z" />
    <path d="M138 178L142 164L172 152H276V170H246L222 179Z" />
    <path d="M114 198L130 182H224L248 176H300L307 198Z" />
    <path d="M148 139H180L188 135H212L224 150H178L186 144H148Z" />
    {aerial && <path d="M232 150L253 88" stroke={ink} strokeWidth="4" />}
    <circle cx="319" cy="183" r="13.5" />
    <path d="M71 200H327L318 217H84Z" />
    <path d="M78 219H322L312 229L288 254H112Z" />
    <path d="M92 224L122 250M310 224L284 250" stroke={paper} strokeWidth="5" />
    <path d="M106 226L128 247H282L302 226Z" fill={paper} />
    {[140, 181, 221, 261].map((x) => <path key={x} d={`M${x - 17} 226H${x + 17}Q${x + 14} 247 ${x} 248Q${x - 14} 247 ${x - 17} 226Z`} />)}
    <path d="M90 226L122 250H286L312 226" fill="none" stroke={ink} strokeWidth="5" />
  </g>
);

const Bmp = ({ aerial }) => (
  <g>
    <path d="M105 158H145V164H105ZM149 158H178V164H149ZM180 157H197L190 166H180Z" />
    <path d="M178 176L198 155H258L263 176Z" />
    {aerial && <path d="M315 116V178" stroke="#444" strokeWidth="5" />}
    <path d="M30 193L100 177H350L356 196L350 216L342 217L335 210H85L62 218L60 212Z" />
    <path d="M70 206Q78 196 100 195H352M80 214Q90 207 110 207" fill="none" stroke="#8b8b8b" strokeWidth="2.5" />
    <path d="M72 220L86 213H338L350 220L328 246L310 258H110L88 243Z" />
    <path d="M98 221H330L310 252H115Z" fill={paper} />
    <path d="M98 213H330L326 222H102Z" />
    {[115, 153, 191, 229, 266, 302].map((x) => <circle key={x} cx={x} cy="237" r="17" stroke={paper} strokeWidth="3" />)}
    <path d="M80 228L110 256H310L345 226" fill="none" stroke={ink} strokeWidth="4" />
    <path d="M78 231L98 229L102 242L90 240Z" />
  </g>
);

const Btr = ({ aerial }) => (
  <g>
    <path d="M87 157H135L148 166H120L87 163ZM130 171L148 153H193V171Z" />
    {aerial && <path d="M216 111V174" stroke={ink} strokeWidth="4" />}
    <path d="M270 168H325L337 174V180H272Z" />
    <path d="M40 197L85 186L98 173H338L345 197L335 234H318L264 205H216V234H196L190 210H140L95 214L80 239Z" />
    <path d="M268 176Q268 183 276 183H328L338 180" fill="none" stroke={paper} strokeWidth="2" />
    {[110, 164, 240, 294].map((x) => (
      <g key={x}>
        <circle cx={x} cy="234" r="29" fill={paper} />
        <circle cx={x} cy="234" r="18.5" fill={paper} stroke={ink} strokeWidth="13" />
      </g>
    ))}
    <path d="M195 196H214V236H196L190 212Z" />
  </g>
);

const Soldier = () => (
  <g>
    <path d="M44 144L80 118L96 117L92 152L80 156L74 150L46 150Z" />
    <path d="M116 117L134 122L147 158L138 166L124 158L118 140Z" />
    <path d="M84 120Q102 128 120 120L122 160L120 194H84Z" fill={paper} stroke={ink} strokeWidth="2.500" />
    <path d="M80 194H98V262Q98 268 92 268H86Q80 268 80 262ZM107 194H126V262Q126 268 120 268H113Q107 268 107 262Z" />
    <circle cx="102" cy="93" r="20" fill={paper} stroke={ink} strokeWidth="3" />
    <path d="M84 88Q102 82 120 88Q120 113 102 114Q84 113 84 88Z" />
    <path d="M80 146L86 138L128 178L143 204L138 206L118 184Z" />
    <path d="M72 134L92 150L88 156L68 140Z" />
    <path d="M92 166L104 158L106 172L96 188L90 184Z" />
    <path d="M90 120L98 150M114 122L108 150" stroke={ink} strokeWidth="2.5" />
    <path d="M134 172L138 182L126 186L112 172L120 160Z" />
  </g>
);

const Squad = () => (
  <Glyph>
    <Soldier />
    <g transform="translate(189 0)"><Soldier /></g>
    <g transform="translate(96 45)"><Soldier /></g>
  </Glyph>
);

const Column = () => (
  <Glyph>
    <g transform="translate(51 -75) scale(.728)"><Btr /></g>
    <g transform="translate(42 29) scale(.763)"><Tank /></g>
    <g transform="translate(51 134) scale(.732)"><Bmp /></g>
  </Glyph>
);

const Mortar = () => (
  <Glyph>
    <path d="M84 98L265 262" stroke={ink} strokeWidth="24" />
    <path d="M262 284L272 262L288 276V284Z" />
    <path d="M88 114L100 90M97 123L110 99M106 132L118 106M142 166L162 140M148 174L172 146M250 266L270 247" stroke={paper} strokeWidth="3" />
    <path d="M146 172L170 148" stroke={ink} strokeWidth="8" />
    <path d="M126 164L164 202" stroke={ink} strokeWidth="10" />
    <path d="M150 137L158 143L152 150L144 142Z" />
    <circle cx="117" cy="169" r="5" />
    <path d="M108 170L116 173L71 291H63Z" />
    <path d="M55 292L62 288H74L79 295H55ZM220 293L226 284H324L330 295H220Z" />
  </Glyph>
);

const Launcher = () => (
  <Glyph>
    <path d="M50 193L115 178L128 152H168V230H205L216 205H318L324 198L334 222V232H328L312 208L300 204H222L212 231H126L118 210H86L72 230L50 226Z" />
    <path d="M132 158H162V177H122ZM127 178L134 158" fill={paper} stroke={ink} strokeWidth="3" />
    <path d="M135 160L128 176" stroke={ink} strokeWidth="3" />
    <path d="M168 166H188V232H168ZM186 186H215V232H186ZM200 200H320V232H200Z" />
    <path d="M171 166V206M189 186V206" stroke={paper} strokeWidth="2" />
    <path d="M230 133H334V162H230Z" />
    <path d="M238 140H316V144H238ZM238 147H316V149H238ZM238 152H316V155H238Z" fill="#a5a5a5" />
    <path d="M200 137H228M200 143H228M200 149H228M200 156H228" stroke={ink} strokeWidth="4" />
    <path d="M232 165L320 166V183ZM215 206L255 200L260 190Q290 174 318 190L320 206Z" />
    {[98, 242, 297].map((x) => <circle key={x} cx={x} cy="234" r="30" fill={paper} />)}
    {[98, 242, 297].map((x) => <circle key={x} cx={x} cy="234" r="18" fill={paper} stroke={ink} strokeWidth="15" />)}
  </Glyph>
);

const Burst = () => (
  <Glyph>
    <path d="M191 124L213 211L263 174L241 221L277 223L250 243L258 258H129L138 243L108 223L146 221L121 174L171 211Z" />
    <path d="M191 186L199 236L224 222L212 242L228 245L212 252H170L156 245L172 242L160 222L183 236Z" fill={paper} />
    <path d="M129 258H257" stroke="#555" strokeWidth="3" />
  </Glyph>
);

const Compass = () => (
  <Glyph>
    <circle cx="192" cy="192" r="72" fill="none" stroke="#000" strokeWidth="16" />
    <path d="M152 232L178 178L232 152L206 206Z" fill="#000" />
    <circle cx="192" cy="192" r="9.5" fill={paper} />
  </Glyph>
);

const Chat = () => (
  <svg width="108" height="108" viewBox="30 30 324 324" fill="none" stroke="#000" strokeWidth="16">
    <path d="M144 119H256Q264 119 264 127V208" />
    <path d="M120 262V159Q120 151 128 151H224Q232 151 232 159V231Q232 239 224 239H138L119 258" />
    <path d="M112 280V240H150Z" fill="#000" stroke="none" />
  </svg>
);

const Gauge = () => (
  <Glyph>
    <path d="M120 102H174V138H126V192H120Z" fill="#000" />
    <path d="M115 190H282V206H123Z" fill="#000" />
    <path d="M126 198L153 279" stroke="#000" strokeWidth="18" />
    <path d="M187 200Q184 240 146 245" stroke="#000" strokeWidth="10" fill="none" />
    <path d="M132 202H180Q176 235 145 240Z" fill={paper} />
    <path d="M138 207H174Q170 230 150 233Z" fill="#000" />
  </Glyph>
);

const RedSquare = () => (
  <Glyph><rect x="124" y="124" width="136" height="136" fill="none" stroke="#d20000" strokeWidth="19" /></Glyph>
);

const Sight = () => (
  <Glyph>
    <g fill="none" stroke="#000" strokeWidth="16">
      <circle cx="192" cy="192" r="64" />
      <circle cx="192" cy="192" r="32" />
      <path d="M104 192H154M230 192H280M192 104V154M192 230V280" />
    </g>
    <circle cx="192" cy="192" r="8" fill="#000" />
  </Glyph>
);

const Locate = () => (
  <svg width="44" height="44" viewBox="0 0 44 44" fill="none" stroke="#000" strokeWidth="3.8">
    <circle cx="22" cy="22" r="16" />
    <path d="M22 0V7M22 37V44M0 22H7M37 22H44" />
    <circle cx="22" cy="22" r="6" fill="#000" stroke="none" />
  </svg>
);

const History = () => (
  <svg width="44" height="44" viewBox="0 0 44 44" fill="none" stroke="#000" strokeWidth="3.8">
    <path d="M3.9 22A18 18 0 1 0 8 10.8" />
    <path d="M2 4V16H14Z" fill="#000" stroke="none" />
    <path d="M22 10V22.5L28.5 28.5" />
  </svg>
);

const Gear = () => (
  <svg width="44" height="44" viewBox="0 0 44 44" fill="none" stroke="#000" strokeWidth="3.8" strokeLinejoin="round">
    <path d="M18.7 4H25.3L26.6 9.6L30.2 11.7L35.6 10L38.9 15.8L35 19.8V24.2L38.9 28.2L35.6 34L30.2 32.3L26.6 34.4L25.3 40H18.7L17.4 34.4L13.8 32.3L8.4 34L5.1 28.2L9 24.2V19.8L5.1 15.8L8.4 10L13.8 11.7L17.4 9.6Z" />
    <circle cx="22" cy="22" r="6.4" />
  </svg>
);

const Plug = () => (
  <svg width="52" height="52" viewBox="0 0 156 156" stroke="#000" strokeWidth="9" strokeLinecap="round">
    <path d="M66 44L116 96M46 63L98 116" />
    <path d="M116 42L134 24M24 132L42 114" strokeWidth="9.5" />
    <path d="M76 50Q84 30 100 34Q112 34 120 46Q130 62 122 74L112 88Z" strokeWidth="2" />
    <path d="M46 72L90 116Q76 130 58 122Q34 112 34 94Q34 80 46 72Z" strokeWidth="2" />
  </svg>
);

const Camera = () => (
  <svg width="54" height="45" viewBox="0 0 54 45">
    <rect x="0" y="1" width="54" height="43" rx="5" />
    <circle cx="21.7" cy="22.4" r="10.8" fill="none" stroke={paper} strokeWidth="5.4" />
    <rect x="40" y="6.5" width="8.5" height="5.5" fill={paper} />
  </svg>
);

const Trash = () => (
  <svg width="54" height="60" viewBox="0 0 54 60" fill="#5f5f5f">
    <path d="M15 9V5Q15 0 20 0H34Q39 0 39 5V9H51.5Q54 9 54 11.5T51.5 14H2.5Q0 14 0 11.5T2.5 9Z" />
    <path d="M21 5.5H34V8.5H21Z" fill={paper} />
    <path d="M5 19H48.5V48Q48.5 59.5 38 59.5H16Q5 59.5 5 48Z" />
    <path d="M20.5 28V46.5M33.3 28V46.5" stroke={paper} strokeWidth="5" strokeLinecap="round" />
  </svg>
);

const Send = () => (
  <svg width="52" height="54" viewBox="0 0 52 54" fill="#5f5f5f">
    <path d="M49 .5Q52.500 0 52 4L35 51Q33.500 54 31.500 51L23 33L32 23.500Q33 20 30 20.500L19 30L2 22Q-1 20 2 17.500Z" />
  </svg>
);

const Star = () => (
  <svg width="30" height="30" viewBox="0 0 30 30">
    <path d="M15 2.500L18.800 11L28 12L21 18L23.200 27.500L15 22.500L6.800 27.500L9 18L2 12L11.200 11Z" fill="none" stroke="#fff" strokeWidth="1.300" />
    <path d="M15 7L17 13L23 13.500L18.500 17.500L20 23L15 20L10 23L11.500 17.500L7 13.500L13 13Z" fill="#f2f2f2" />
  </svg>
);

const Windows = () => (
  <svg width="34" height="30" viewBox="0 0 34 30" fill="none" stroke="#fff" strokeWidth="1.600">
    <path d="M7.500 18.500H3.500Q2 18.500 2 17V4Q2 2.500 3.500 2.500H24.500Q26 2.500 26 4V11" />
    <rect x="8" y="11.500" width="24.500" height="16" rx="1.500" />
    <path d="M16.500 6H25M22.500 15H31" strokeDasharray="2 1.200" strokeWidth="1.800" />
  </svg>
);

const Folder = () => (
  <svg width="34" height="30" viewBox="0 0 34 30" fill="none" stroke="#fff" strokeWidth="1.600">
    <path d="M2 26V4Q2 2.500 3.500 2.500H9.500Q11 2.500 11 4V6.500H31Q32.500 6.500 32.500 8V26Q32.500 27.500 31 27.500H3.500Q2 27.500 2 26ZM2 6.500H11" />
    <path d="M10.500 17Q17 11.500 24 17Q17 22.500 10.500 17ZM17 10.500V13M11.500 12L13 13.800M23 12L21.500 13.800" />
    <circle cx="17.200" cy="17" r="1.500" fill="#fff" />
  </svg>
);

const Bat = () => (
  <svg width="31" height="23" viewBox="0 0 93 66" fill="#0c0c0c">
    <path d="M0 36Q10 26 30 22L34 18L28 12L30 2L42 8H50L64 2L66 12L60 18L64 22Q84 26 93 36L82 46L80 58L70 52L62 60L54 53L47 64L38 53L30 60L24 52L12 58L10 46Z" />
    <path d="M36 18Q47 10 58 18M36 25Q47 18 58 25M41 32L45 30V50H50V30L54 32" fill="none" stroke="#8eacc3" strokeWidth="2" />
  </svg>
);

const Speaker = () => (
  <svg width="26" height="28" viewBox="0 0 26 28" fill="none" stroke="#fff" strokeWidth="1.500">
    <path d="M2 9.500H7L16.500 1.500V26.500L7 19.500H2ZM20 9Q24.500 14 20 19.500" />
  </svg>
);

const Network = () => (
  <svg width="34" height="32" viewBox="0 0 34 32" fill="none" stroke="#fff" strokeWidth="1.600">
    <path d="M10 14H3Q2 14 2 13V3Q2 2 3 2H21Q22 2 22 3V12M3 17V23H9M6 20L9 23L6 26" />
    <rect x="12" y="13" width="20" height="14" rx="1" />
    <path d="M17 30.500H27M22 27V30M19 20L21.500 22.500L26 17.500" />
  </svg>
);

const Messages = () => (
  <svg width="30" height="28" viewBox="0 0 30 28" fill="none" stroke="#fff" strokeWidth="1.600">
    <path d="M25 24H4Q1.500 24 1.500 21V7Q1.500 4.500 4 4.500H25Q28 4.500 28 7V21Q28 24 25 24V27L21 24M5.500 10H22M5.500 14.500H25M5.500 19H20" />
    <circle cx="25.200" cy="4.800" r="4.800" fill="#ea4d4d" stroke="none" />
  </svg>
);

const InfoBadge = () => (
  <svg width="20" height="20" viewBox="0 0 20 20">
    <circle cx="10" cy="10" r="10" fill="#45a7ee" />
    <path d="M10 4V6.500M8 8.500H10.500V15M7.500 15.300H13" fill="none" stroke="#fff" strokeWidth="1.800" />
  </svg>
);

const CloseMark = () => (
  <svg width="16" height="16" viewBox="0 0 16 16"><path d="M1.500 1.500L14.500 14.500M14.500 1.500L1.500 14.500" stroke="#fff" strokeWidth="1.800" /></svg>
);

const fields = ["ТИП", "ХД", "УКР", "X", "Y"];

export default function App() {
  return (
    <Desktop>
      <GlobalStyle />
      <AppWindow>
        <MapView />
        <HScroll />
        <VScroll />
        <Overlay>
          <Palette>
            <Key><Squad /></Key>
            <Key><Column /></Key>
            <Key><Glyph><Tank aerial /></Glyph></Key>
            <Key><Mortar /></Key>
            <Key><Launcher /></Key>
            <Key><Glyph><Bmp aerial /></Glyph></Key>
            <Key><Glyph><Btr aerial /></Glyph></Key>
          </Palette>
          <Stage>
            <TopRow>
              <LinkState><Plug /></LinkState>
              <Clock>
                <div>13.03.2024</div>
                <div>11:56:42</div>
              </Clock>
              <TopKeys>
                <Key $size={96}><Locate /></Key>
                <Key $size={96}><History /></Key>
                <Key $size={96}><Gear /></Key>
              </TopKeys>
            </TopRow>
            <Panel>
              <PanelTitle>ДАННЫЕ ПО ОБЪЕКТУ</PanelTitle>
              {fields.map((name) => (
                <Field key={name}>
                  <FieldLabel>{name}</FieldLabel>
                  <FieldLine />
                </Field>
              ))}
              <Field>
                <FieldLabel>СРО</FieldLabel>
                <FieldLine $gap={4} />
                <FieldLabel $w={38}>Н</FieldLabel>
                <FieldLine $gap={0} />
              </Field>
              <StatusChip />
              <Actions>
                <Key><Camera /></Key>
                <Divider />
                <Key $kind="disabled"><Trash /></Key>
                <SendSlot><Key $kind="disabled"><Send /></Key></SendSlot>
              </Actions>
            </Panel>
            <Toolbar>
              <Key><Compass /></Key>
              <Key $kind="active"><Chat /></Key>
              <Key><Gauge /></Key>
              <ToolGap />
              <Key><Burst /></Key>
              <Key><RedSquare /></Key>
              <Key><Sight /></Key>
            </Toolbar>
          </Stage>
        </Overlay>
      </AppWindow>
      <Taskbar>
        <Launchers>
          <Star />
          <Windows />
          <Folder />
        </Launchers>
        <BarRule $after={10} />
        <Task><Bat />МУР</Task>
        <Tray>
          <TrayIcons>
            <Speaker />
            <Network />
            <Messages />
          </TrayIcons>
          <LayoutBadge>ru</LayoutBadge>
          <BarRule $after={6} />
          <TrayClock>
            <TrayTime>11:56</TrayTime>
            <TrayDate>СР, 13 МАР</TrayDate>
          </TrayClock>
          <BarEdge />
        </Tray>
      </Taskbar>
      <Toast>
        <ToastHead>
          <InfoBadge />
          <ToastSender>Командир (Бабочка)</ToastSender>
          <ToastTime>11:56</ToastTime>
          <CloseMark />
        </ToastHead>
        <ToastBody>отговорила роща золотая</ToastBody>
      </Toast>
    </Desktop>
  );
}
